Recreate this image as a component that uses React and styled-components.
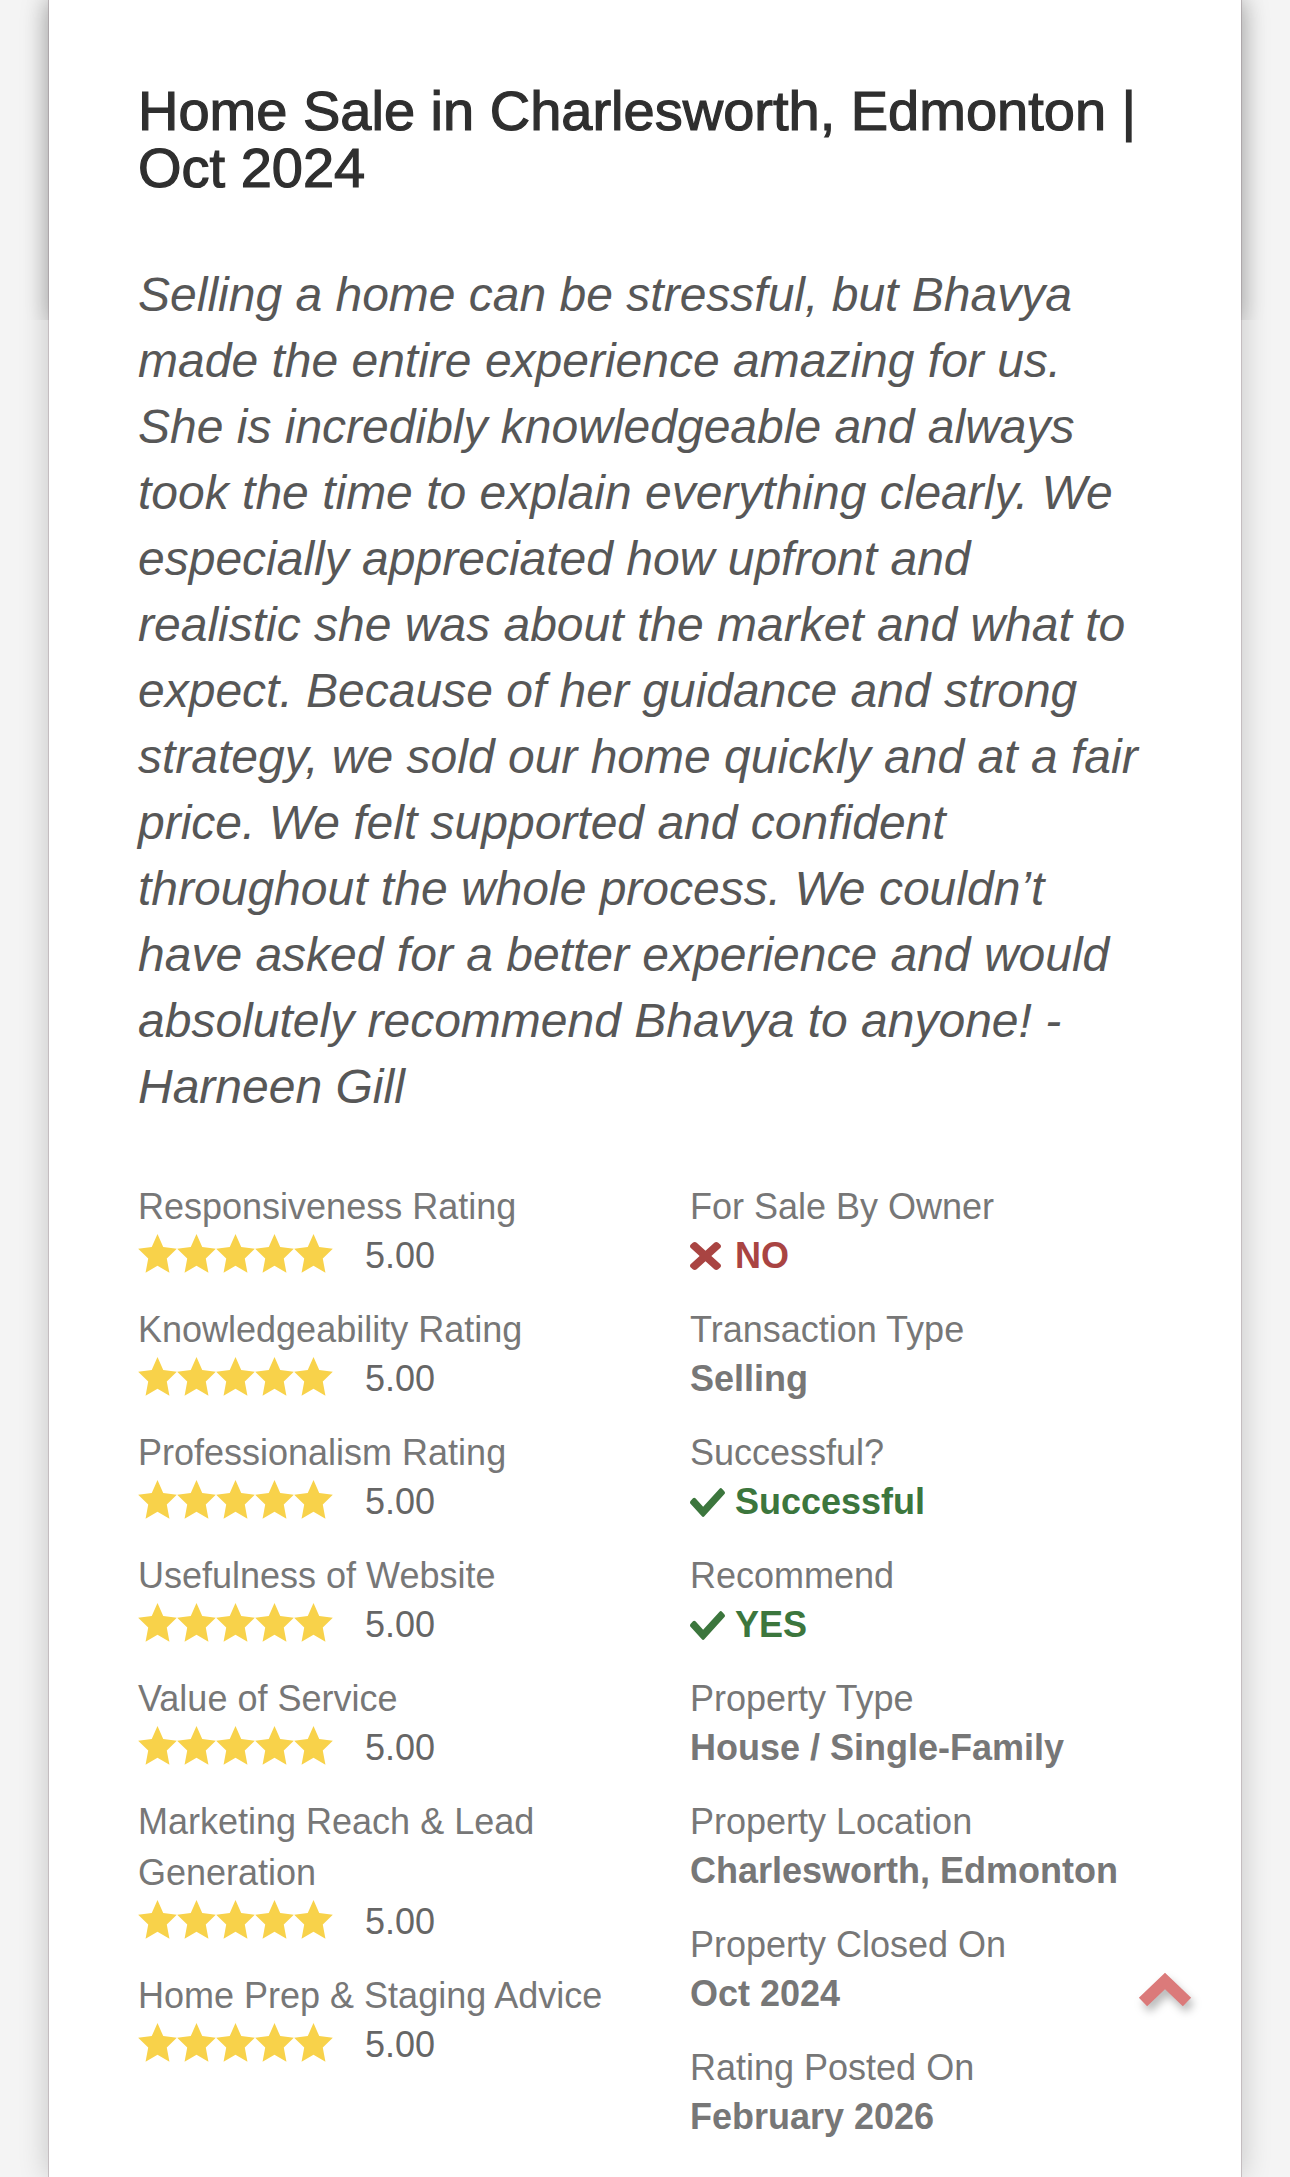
import React from "react";
import styled, { createGlobalStyle } from "styled-components";

const GlobalStyle = createGlobalStyle`
  html, body { margin: 0; padding: 0; background: #f4f4f4; }
  body { font-family: "Liberation Sans", Arial, Helvetica, sans-serif; }
  #root { height: 2177px; overflow: hidden; }
`;

const Page = styled.div`
  height: 2177px;
  padding: 0 48px;
  box-sizing: border-box;
`;

const Card = styled.article`
  position: relative;
  isolation: isolate;
  box-sizing: border-box;
  height: 2177px;
  background: #ffffff;
  border-left: 1px solid #c4bdc0;
  border-right: 1px solid #c4bdc0;
  box-shadow: 0 0 28px rgba(0, 0, 0, 0.2);
  padding: 82px 89px 0;

  &::before {
    content: "";
    position: absolute;
    left: 0;
    right: 0;
    top: 0;
    height: 320px;
    box-shadow: 0 0 22px rgba(0, 0, 0, 0.24);
    clip-path: inset(0 -60px 0 -60px);
    z-index: -1;
  }
`;

const Title = styled.h1`
  margin: 0;
  font-size: 56px;
  line-height: 57px;
  font-weight: 400;
  color: #2f2f2f;
  -webkit-text-stroke: 1.2px #2f2f2f;
`;

const Quote = styled.p`
  margin: 66px 0 0;
  font-size: 48px;
  line-height: 66px;
  font-style: italic;
  color: #575757;
  white-space: nowrap;
`;

const Details = styled.section`
  margin-top: 61px;
  display: grid;
  grid-template-columns: 520px 1fr;
  column-gap: 32px;
  align-items: start;
`;

const Column = styled.div`
  display: flex;
  flex-direction: column;
  gap: 24px;
`;

const Item = styled.div`
  display: flex;
  flex-direction: column;
`;

const Label = styled.div`
  font-size: 36px;
  line-height: 51px;
  color: #777777;
`;

const Value = styled.div`
  display: flex;
  align-items: center;
  font-size: 36px;
  line-height: 48px;
  font-weight: ${(p) => (p.$plain ? 400 : 700)};
  color: ${(p) =>
    p.$tone === "danger" ? "#a94442" : p.$tone === "success" ? "#3c763d" : p.$plain ? "#666666" : "#777777"};
`;

const Stars = styled.span`
  display: inline-flex;
  margin-bottom: 5px;
`;

const Score = styled.span`
  margin-left: 32px;
`;

const IconBox = styled.svg`
  flex: none;
  margin-right: ${(p) => p.$gap}px;
  fill: currentColor;
`;

const ToTop = styled.svg`
  position: fixed;
  left: 1133px;
  top: 1968px;
  filter: drop-shadow(3px 6px 4px rgba(0, 0, 0, 0.28));
`;

const Star = () => (
  <svg width="39" height="39" viewBox="2 3 96 91" preserveAspectRatio="none">
    <polygon
      fill="#f8d24a"
      points="50,3 64.11,33.58 97.55,37.55 72.83,60.42 79.39,93.45 50,77 20.61,93.45 27.17,60.42 2.45,37.55 35.89,33.58"
    />
  </svg>
);

const Rating = ({ score }) => (
  <Value $plain>
    <Stars>
      {[0, 1, 2, 3, 4].map((i) => (
        <Star key={i} />
      ))}
    </Stars>
    <Score>{score}</Score>
  </Value>
);

const Cross = () => (
  <IconBox width="31" height="28" viewBox="0 80 352 352" preserveAspectRatio="none" $gap={14}>
    <path d="M242.72 256l100.07-100.07c12.28-12.28 12.28-32.19 0-44.48l-22.24-22.24c-12.28-12.28-32.19-12.28-44.48 0L176 189.28 75.93 89.21c-12.28-12.28-32.19-12.28-44.48 0L9.21 111.45c-12.28 12.28-12.28 32.19 0 44.48L109.28 256 9.21 356.07c-12.28 12.28-12.28 32.19 0 44.48l22.24 22.24c12.28 12.28 32.2 12.28 44.48 0L176 322.72l100.07 100.07c12.28 12.28 32.2 12.28 44.48 0l22.24-22.24c12.28-12.28 12.28-32.19 0-44.48L242.72 256z" />
  </IconBox>
);

const Check = () => (
  <IconBox width="35" height="29" viewBox="0 64 512 384" preserveAspectRatio="none" $gap={10}>
    <path d="M173.898 439.404l-166.4-166.4c-9.997-9.997-9.997-26.206 0-36.204l36.203-36.204c9.997-9.998 26.207-9.998 36.204 0L192 312.69 432.095 72.596c9.997-9.997 26.207-9.997 36.204 0l36.203 36.204c9.997 9.997 9.997 26.206 0 36.204l-294.4 294.401c-9.998 9.997-26.207 9.997-36.204-.001z" />
  </IconBox>
);

const quoteLines = [
  "Selling a home can be stressful, but Bhavya",
  "made the entire experience amazing for us.",
  "She is incredibly knowledgeable and always",
  "took the time to explain everything clearly. We",
  "especially appreciated how upfront and",
  "realistic she was about the market and what to",
  "expect. Because of her guidance and strong",
  "strategy, we sold our home quickly and at a fair",
  "price. We felt supported and confident",
  "throughout the whole process. We couldn’t",
  "have asked for a better experience and would",
  "absolutely recommend Bhavya to anyone! -",
  "Harneen Gill",
];

const ratings = [
  "Responsiveness Rating",
  "Knowledgeability Rating",
  "Professionalism Rating",
  "Usefulness of Website",
  "Value of Service",
  "Marketing Reach & Lead Generation",
  "Home Prep & Staging Advice",
];

const facts = [
  { label: "For Sale By Owner", value: "NO", tone: "danger", icon: <Cross /> },
  { label: "Transaction Type", value: "Selling" },
  { label: "Successful?", value: "Successful", tone: "success", icon: <Check /> },
  { label: "Recommend", value: "YES", tone: "success", icon: <Check /> },
  { label: "Property Type", value: "House / Single-Family" },
  { label: "Property Location", value: "Charlesworth, Edmonton" },
  { label: "Property Closed On", value: "Oct 2024" },
  { label: "Rating Posted On", value: "February 2026" },
];

export default function App() {
  return (
    <>
      <GlobalStyle />
      <Page>
        <Card>
          <Title>Home Sale in Charlesworth, Edmonton | Oct 2024</Title>
          <Quote>
            {quoteLines.map((line, i) => (
              <React.Fragment key={i}>
                {line}
                {i < quoteLines.length - 1 && <br />}
              </React.Fragment>
            ))}
          </Quote>
          <Details>
            <Column>
              {ratings.map((r) => (
                <Item key={r}>
                  <Label>{r}</Label>
                  <Rating score="5.00" />
                </Item>
              ))}
            </Column>
            <Column>
              {facts.map((f) => (
                <Item key={f.label}>
                  <Label>{f.label}</Label>
                  <Value $tone={f.tone}>
                    {f.icon}
                    {f.value}
                  </Value>
                </Item>
              ))}
            </Column>
          </Details>
        </Card>
      </Page>
      <ToTop width="64" height="44" viewBox="0 0 64 44" aria-label="Back to top">
        <polyline
          points="10,34 32,13 54,34"
          fill="none"
          stroke="#db7a7a"
          strokeWidth="12"
          strokeLinecap="butt"
          strokeLinejoin="miter"
        />
      </ToTop>
    </>
  );
}
